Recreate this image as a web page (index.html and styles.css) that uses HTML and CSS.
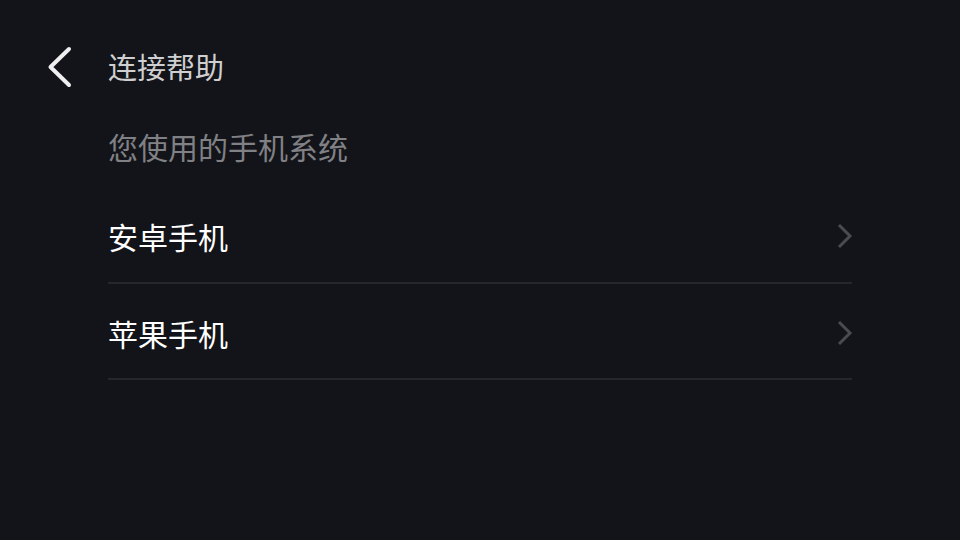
FILE: index.html
```html
<!DOCTYPE html>
<html lang="zh">
<head>
<meta charset="utf-8">
<link rel="stylesheet" href="styles.css">
</head>
<body>
<div class="page">
  <header class="header">
    <span class="back">
      <svg width="26" height="44" viewBox="0 0 26 44"><path d="M22 5 L3.5 23 L22 41" fill="none" stroke="#efefef" stroke-width="4" stroke-linecap="round" stroke-linejoin="round"/></svg>
    </span>
    <h1 class="title">连接帮助</h1>
  </header>
  <div class="content">
    <div class="subtitle">您使用的手机系统</div>
    <ul class="list">
      <li class="item"><span class="label">安卓手机</span><svg class="arrow" width="16" height="26" viewBox="0 0 16 26"><path d="M2 2 L13 13 L2 24" fill="none" stroke="#4a4b50" stroke-width="3" stroke-linejoin="miter"/></svg></li>
      <li class="item"><span class="label">苹果手机</span><svg class="arrow" width="16" height="26" viewBox="0 0 16 26"><path d="M2 2 L13 13 L2 24" fill="none" stroke="#4a4b50" stroke-width="3" stroke-linejoin="miter"/></svg></li>
    </ul>
  </div>
</div>
</body>
</html>
```
FILE: styles.css
```css
html, body {
  margin: 0;
  padding: 0;
  background: #131419;
  font-family: "Noto Sans CJK SC", "Noto Sans", sans-serif;
}
.page {
  width: 960px;
  height: 540px;
  background: #131419;
}
.header {
  display: flex;
  align-items: center;
  padding-left: 47px;
  padding-top: 44px;
}
.back {
  display: flex;
  width: 61px;
}
.title {
  margin: 0;
  font-size: 29px;
  font-weight: normal;
  color: #cfcfd1;
  line-height: 40px;
}
.content {
  padding: 0 108px;
}
.subtitle {
  margin-top: 38px;
  font-size: 30px;
  line-height: 40px;
  color: #808185;
}
.list {
  list-style: none;
  margin: 0;
  padding: 0;
}
.item {
  display: flex;
  align-items: center;
  justify-content: space-between;
  box-sizing: border-box;
  height: 96px;
  padding-top: 4px;
  border-bottom: 2px solid #26272c;
}
.item:first-child {
  height: 118px;
  padding-top: 23px;
}
.label {
  font-size: 30px;
  color: #ffffff;
  line-height: 40px;
}
.arrow {
  display: block;
  margin-right: -1px;
}
```
